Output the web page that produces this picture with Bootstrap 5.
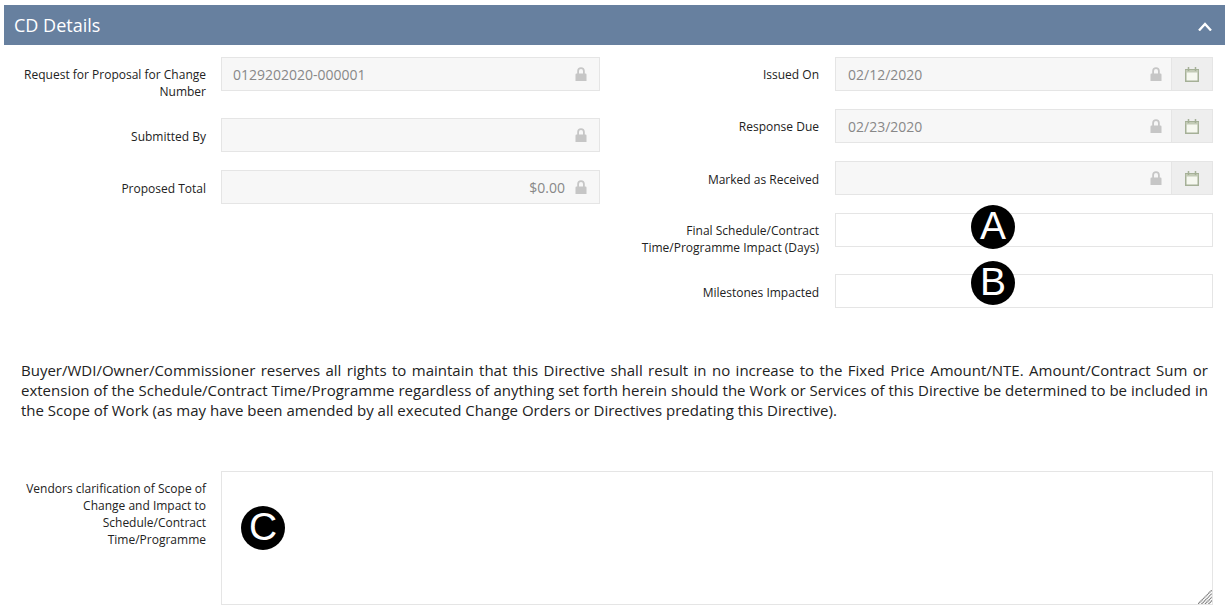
<!DOCTYPE html>
<html lang="en">
<head>
<meta charset="utf-8">
<title>CD Details</title>
<link href="https://cdn.jsdelivr.net/npm/bootstrap@5.3.0/dist/css/bootstrap.min.css" rel="stylesheet">
<style>
html,body{background:#fff;overflow:hidden}
body{font-family:"Open Sans","Noto Sans",sans-serif;color:#222;height:611px}
.cd-panel{padding:5px 5px 0 4px}
.cd-head{background:#67809f;color:#fff;height:40px;padding:0 10px;font-size:18px;line-height:40px}
.cd-head svg{margin-right:3px;margin-top:2px}
.cd-cols{padding-top:12px;height:315px}
.cd-side-l{width:600px}
.cd-side-r{width:613px}
.cd-row{margin-bottom:18px}
.cd-label{font-size:12px;line-height:17px;text-align:right;padding-top:9px;margin:0;color:#222;flex:0 0 auto}
.cd-label-low{padding-top:10px}
.cd-side-l .cd-label,.cd-wide .cd-label{width:202px;margin-right:15px}
.cd-side-r .cd-label{width:215px;margin-right:16px}
.cd-side-l .cd-field{width:379px}
.cd-side-r .cd-field{width:378px}
.cd-field{height:34px;position:relative;flex:0 0 auto}
.cd-field .form-control{height:34px;border:1px solid #e5e5e5;border-radius:0;font-size:14px;line-height:20px;padding:6px 12px;color:#555;background:#fff;box-shadow:none;font-family:inherit}
.cd-side-l .form-control{padding-left:11px}
.cd-field .form-control:disabled{background:#f7f7f7;color:#888;opacity:1}
.cd-lock{position:absolute;right:13px;top:10px;z-index:5}
.cd-addon{width:42px;height:34px;background:#eee;border:1px solid #e5e5e5;border-left:0;border-radius:0;padding:0;justify-content:center;flex:0 0 auto}
.cd-date .cd-lock{right:51px}
.cd-money .form-control{text-align:right;padding-right:34px}
.cd-para{font-size:15px;line-height:20px;text-align:justify;color:#222;margin:0;padding:0 17px;height:111px}
.cd-area{width:992px;height:134px;border:1px solid #e5e5e5;border-radius:0;box-shadow:none;font-family:inherit;resize:none}
.cd-area-wrap{position:relative}
.cd-grip{position:absolute;right:1px;bottom:1px;z-index:5}
.cd-mark{position:absolute;width:44px;height:44px;border-radius:50%;background:#000;color:#fff;font-family:"Liberation Sans",Arial,sans-serif;font-size:39px;line-height:41px;text-align:center;z-index:10;pointer-events:none}
.cd-mark-a{left:136px;top:-8px}
.cd-mark-b{left:136px;top:-13px}
.cd-mark-c{left:20px;top:35px}
</style>
</head>
<body>
<svg class="d-none" aria-hidden="true">
  <symbol id="cd-i-lock" viewBox="0 0 12 14"><path d="M1.500 6.500h9a1 1 0 0 1 1 1V14H.5V7.500a1 1 0 0 1 1-1zM2.200 6.500V4a3.800 3.800 0 0 1 7.600 0v2.500H8V4a2 2 0 0 0-4 0v2.500z" fill="#c6c6c6"/></symbol>
  <symbol id="cd-i-cal" viewBox="0 0 14 15"><path d="M.75 2.750h12.500v11.500H.75z" fill="#f6f8f0" stroke="#a5b097" stroke-width="1.500"/><path d="M.75 3h12.500v2.500H.75z" fill="#c3cbb6"/><path d="M3.500 0v4M10.500 0v4" stroke="#a5b097" stroke-width="1.500"/></symbol>
</svg>
<div class="cd-panel">
  <div class="cd-head d-flex justify-content-between align-items-center">
    <span>CD Details</span>
    <svg width="14" height="9" viewBox="0 0 14 9" aria-hidden="true"><path d="M1 8.500l6-6.500 6 6.500" fill="none" stroke="#fff" stroke-width="2.300"/></svg>
  </div>
  <div class="cd-cols d-flex">
    <div class="cd-side-l">
      <div class="cd-row d-flex">
        <label class="cd-label">Request for Proposal for Change Number</label>
        <div class="cd-field"><input class="form-control" disabled value="0129202020-000001">
          <svg class="cd-lock" width="12" height="14"><use href="#cd-i-lock"/></svg></div>
      </div>
      <div class="cd-row d-flex">
        <label class="cd-label cd-label-low">Submitted By</label>
        <div class="cd-field"><input class="form-control" disabled>
          <svg class="cd-lock" width="12" height="14"><use href="#cd-i-lock"/></svg></div>
      </div>
      <div class="cd-row d-flex">
        <label class="cd-label cd-label-low">Proposed Total</label>
        <div class="cd-field cd-money"><input class="form-control" disabled value="$0.00">
          <svg class="cd-lock" width="12" height="14"><use href="#cd-i-lock"/></svg></div>
      </div>
    </div>
    <div class="cd-side-r">
      <div class="cd-row d-flex">
        <label class="cd-label">Issued On</label>
        <div class="cd-field cd-date input-group flex-nowrap"><input class="form-control" disabled value="02/12/2020">
          <svg class="cd-lock" width="12" height="14"><use href="#cd-i-lock"/></svg>
          <span class="input-group-text cd-addon"><svg width="14" height="15"><use href="#cd-i-cal"/></svg></span></div>
      </div>
      <div class="cd-row d-flex">
        <label class="cd-label">Response Due</label>
        <div class="cd-field cd-date input-group flex-nowrap"><input class="form-control" disabled value="02/23/2020">
          <svg class="cd-lock" width="12" height="14"><use href="#cd-i-lock"/></svg>
          <span class="input-group-text cd-addon"><svg width="14" height="15"><use href="#cd-i-cal"/></svg></span></div>
      </div>
      <div class="cd-row d-flex">
        <label class="cd-label cd-label-low">Marked as Received</label>
        <div class="cd-field cd-date input-group flex-nowrap"><input class="form-control" disabled>
          <svg class="cd-lock" width="12" height="14"><use href="#cd-i-lock"/></svg>
          <span class="input-group-text cd-addon"><svg width="14" height="15"><use href="#cd-i-cal"/></svg></span></div>
      </div>
      <div class="cd-row d-flex">
        <label class="cd-label">Final Schedule/Contract Time/Programme Impact (Days)</label>
        <div class="cd-field"><input class="form-control"><span class="cd-mark cd-mark-a">A</span></div>
      </div>
      <div class="cd-row d-flex">
        <label class="cd-label cd-label-low">Milestones Impacted</label>
        <div class="cd-field"><input class="form-control"><span class="cd-mark cd-mark-b">B</span></div>
      </div>
    </div>
  </div>
  <p class="cd-para">Buyer/WDI/Owner/Commissioner reserves all rights to maintain that this Directive shall result in no increase to the Fixed Price Amount/NTE. Amount/Contract Sum or extension of the Schedule/Contract Time/Programme regardless of anything set forth herein should the Work or Services of this Directive be determined to be included in the Scope of Work (as may have been amended by all executed Change Orders or Directives predating this Directive).</p>
  <div class="cd-wide d-flex">
    <label class="cd-label">Vendors clarification of Scope of Change and Impact to Schedule/Contract Time/Programme</label>
    <div class="cd-area-wrap"><textarea class="form-control cd-area"></textarea><span class="cd-mark cd-mark-c">C</span>
      <svg class="cd-grip" width="14" height="14" viewBox="0 0 14 14" aria-hidden="true"><path d="M0 14L14 0M3.500 14L14 3.500M7 14l7-7M10.500 14l3.500-3.500" stroke="#808080" stroke-width="1.300" stroke-dasharray="1.400 .4" fill="none"/></svg></div>
  </div>
</div>
<script src="https://cdn.jsdelivr.net/npm/bootstrap@5.3.0/dist/js/bootstrap.bundle.min.js"></script>
</body>
</html>
